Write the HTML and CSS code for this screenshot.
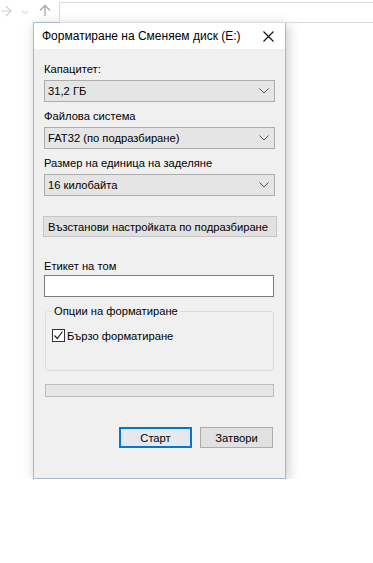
FILE: index.html
```html
<!DOCTYPE html>
<html lang="bg">
<head>
    <meta charset="UTF-8">
    <meta name="viewport" content="width=device-width, initial-scale=1.0">
    <title>Форматиране</title>
    <link rel="stylesheet" href="styles.css">
</head>
<body>
<div class="toolbar">
    <svg class="nav-icon" width="12" height="12" viewBox="0 0 12 12">
        <path d="M1 6h10M6 1l5 5-5 5" fill="none" stroke="#d0d0d0" stroke-width="1.2"/>
    </svg>
    <svg class="nav-icon chevron-small" width="8" height="6" viewBox="0 0 8 6">
        <path d="M1 1.5l3 3 3-3" fill="none" stroke="#c8c8c8" stroke-width="1"/>
    </svg>
    <svg class="nav-icon up" width="12" height="13" viewBox="0 0 12 13">
        <path d="M6 12V1.5M1 6.5l5-5 5 5" fill="none" stroke="#a8a8a8" stroke-width="1.3"/>
    </svg>
    <div class="address"></div>
</div>

<div class="dialog">
    <div class="titlebar">
        <span class="title">Форматиране на Сменяем диск (E:)</span>
        <svg class="close" width="11" height="11" viewBox="0 0 11 11">
            <path d="M0.5 0.5l10 10M10.5 0.5l-10 10" stroke="#111" stroke-width="1.1"/>
        </svg>
    </div>
    <div class="content">
        <label class="field-label">Капацитет:</label>
        <div class="combo">
            <span>31,2 ГБ</span>
            <svg width="10" height="6" viewBox="0 0 10 6"><path d="M0.5 0.5l4.5 4.5 4.5-4.5" fill="none" stroke="#555" stroke-width="1"/></svg>
        </div>

        <label class="field-label">Файлова система</label>
        <div class="combo">
            <span>FAT32 (по подразбиране)</span>
            <svg width="10" height="6" viewBox="0 0 10 6"><path d="M0.5 0.5l4.5 4.5 4.5-4.5" fill="none" stroke="#555" stroke-width="1"/></svg>
        </div>

        <label class="field-label">Размер на единица на заделяне</label>
        <div class="combo">
            <span>16 килобайта</span>
            <svg width="10" height="6" viewBox="0 0 10 6"><path d="M0.5 0.5l4.5 4.5 4.5-4.5" fill="none" stroke="#555" stroke-width="1"/></svg>
        </div>

        <button type="button" class="restore">Възстанови настройката по подразбиране</button>

        <label class="field-label volume-label">Етикет на том</label>
        <input type="text" class="textbox">

        <fieldset class="options">
            <legend>Опции на форматиране</legend>
            <label class="check">
                <span class="box">
                    <svg width="11" height="11" viewBox="0 0 11 11"><path d="M1.5 5.5l2.8 3 5.2-7" fill="none" stroke="#222" stroke-width="1.2"/></svg>
                </span>
                Бързо форматиране
            </label>
        </fieldset>

        <div class="progress"></div>

        <div class="actions">
            <button type="button" class="btn default">Старт</button>
            <button type="button" class="btn">Затвори</button>
        </div>
    </div>
</div>
</body>
</html>
```

FILE: styles.css
```css
body {
    margin: 0;
    background-color: #fff;
    font-family: "Liberation Sans", Arial, sans-serif;
    font-size: 11.2px;
    color: #000;
}

.toolbar {
    height: 22px;
    display: flex;
    align-items: flex-start;
}

.nav-icon {
    display: block;
    margin-top: 5px;
}

.chevron-small {
    margin-top: 9px;
    margin-left: 9px;
}

.up {
    margin-left: 10px;
    margin-top: 4px;
}

.address {
    flex: 1;
    height: 19px;
    margin-top: 2px;
    margin-left: 8px;
    border: 1px solid #dadada;
    border-right: none;
}

.dialog {
    width: 251px;
    height: 455px;
    margin-left: 33px;
    border: 1px solid #a9b7c8;
    background-color: #f0f0f0;
    box-shadow: 2px 3px 12px rgba(0, 0, 0, 0.22);
}

.titlebar {
    height: 26px;
    background-color: #fff;
    display: flex;
    align-items: center;
    justify-content: space-between;
    padding: 0 11px 0 8px;
}

.title {
    font-size: 12px;
    color: #000;
}

.close {
    display: block;
}

.content {
    padding: 12px 10px 0;
}

.field-label {
    display: block;
    line-height: 16px;
    margin-bottom: 3px;
    white-space: nowrap;
}

.combo {
    height: 20px;
    border: 1px solid #acacac;
    background-color: #e5e5e5;
    display: flex;
    align-items: center;
    justify-content: space-between;
    padding: 0 5px 0 3px;
    margin-bottom: 6px;
}

.combo svg {
    display: block;
}

.restore {
    display: block;
    width: 234px;
    height: 21px;
    margin: 20px 0 0 -1px;
    padding: 0 0 0 4px;
    border: 1px solid #c5c5c5;
    background-color: #e1e1e1;
    font-family: inherit;
    font-size: 11.2px;
    text-align: left;
    white-space: nowrap;
    color: #000;
}

.volume-label {
    margin-top: 21px;
    margin-bottom: 1px;
}

.textbox {
    display: block;
    box-sizing: border-box;
    width: 230px;
    height: 22px;
    margin: 0;
    border: 1px solid #7a7a7a;
    background-color: #fff;
    padding: 0 3px;
}

.options {
    box-sizing: border-box;
    width: 229px;
    height: 68px;
    margin: 6px 0 0 1px;
    padding: 0 6px;
    border: 1px solid #dcdcdc;
    border-radius: 3px;
}

.options legend {
    padding: 0 2px;
    line-height: 16px;
}

.check {
    display: flex;
    align-items: center;
    margin-top: 10px;
}

.box {
    box-sizing: border-box;
    width: 13px;
    height: 13px;
    border: 1px solid #333;
    background-color: #fff;
    margin-right: 2px;
    display: flex;
    align-items: center;
    justify-content: center;
}

.box svg {
    display: block;
}

.progress {
    width: 227px;
    height: 11px;
    margin: 13px 0 0 1px;
    border: 1px solid #bcbcbc;
    background-color: #e6e6e6;
}

.actions {
    display: flex;
    justify-content: flex-end;
    gap: 8px;
    margin-top: 30px;
    padding-right: 2px;
}

.btn {
    width: 73px;
    height: 21px;
    padding: 0;
    border: 1px solid #adadad;
    background-color: #e1e1e1;
    font-family: inherit;
    font-size: 11.2px;
    color: #000;
}

.btn.default {
    border: 2px solid #0078d7;
    background-color: #e5e9ee;
}
```
